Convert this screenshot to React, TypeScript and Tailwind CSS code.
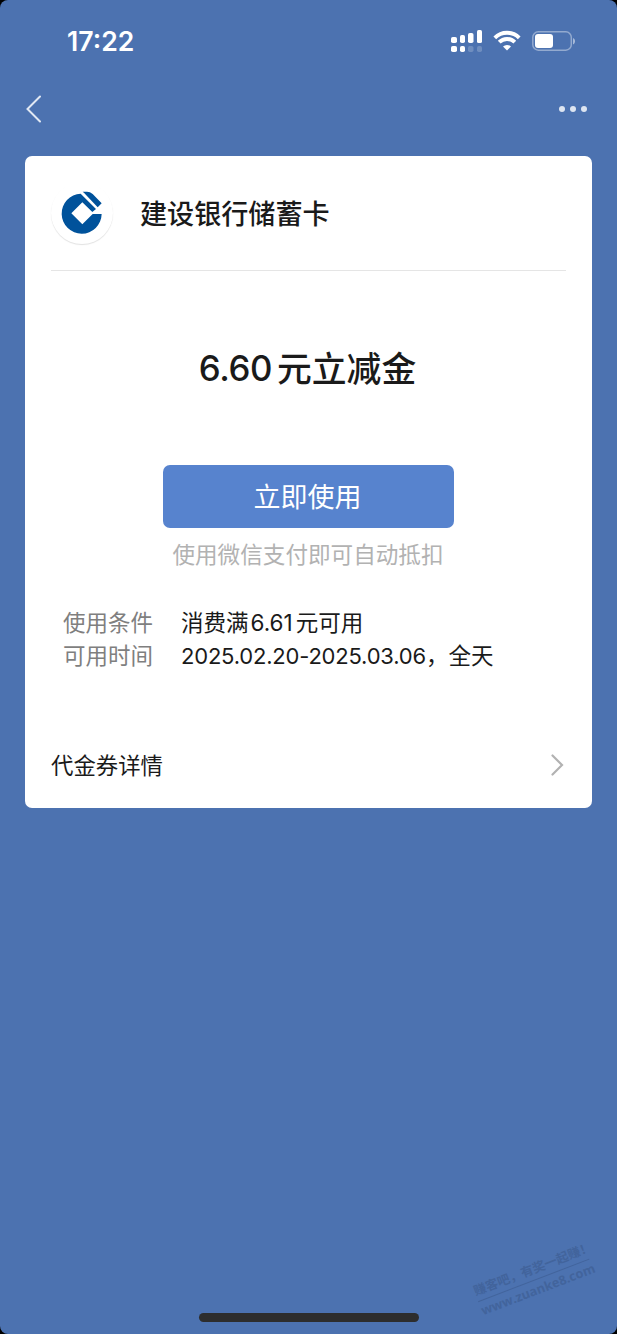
function StatusIcons() {
  return (
    <svg width="125" height="24" viewBox="0 0 125 24" fill="none">
      <g fill="#fff">
        <rect x="1" y="8" width="6" height="6" rx="1.8" />
        <rect x="10" y="6" width="5" height="8" rx="1.8" />
        <rect x="18" y="4" width="5.5" height="10" rx="1.8" />
        <rect x="27" y="1" width="5" height="13" rx="1.6" />
        <rect x="1" y="17" width="6" height="6" rx="1.8" />
        <rect x="10" y="17" width="5" height="6" rx="1.8" />
        <rect x="18" y="17" width="5.5" height="6" rx="1.8" opacity="0.2" />
        <rect x="27" y="17" width="5" height="6" rx="1.8" opacity="0.2" />
      </g>
      <g stroke="#fff" strokeWidth="3.9">
        <path d="M44.8 8.8a17.3 17.3 0 0 1 24.4 0" />
        <path d="M49.2 13.2a11 11 0 0 1 15.6 0" />
      </g>
      <path d="M57 21.5l-4-4a5.8 5.8 0 0 1 8 0z" fill="#fff" />
      <rect x="82.8" y="2.8" width="38.5" height="18.4" rx="5.5" stroke="#fff" strokeOpacity="0.4" strokeWidth="1.5" />
      <rect x="85" y="5" width="18" height="14" rx="3" fill="#fff" />
      <path d="M123 9a3.5 3.5 0 0 1 0 6.4z" fill="#fff" fillOpacity="0.5" />
    </svg>
  );
}

function BankLogo() {
  return (
    <svg width="62" height="62" viewBox="3 1 186 186">
      <g fill="#00529b">
        <path d="M92 36A60 60 0 1 0 155 97H128L97 128L64 95L97 62L127 91L138 82Z" />
        <path d="M98 30H111Q120 30 128 37L155 65L143 77L106 38Q103 33 98 30Z" />
      </g>
    </svg>
  );
}

export default function App() {
  return (
    <div className="bg-black">
      <div className="relative flex h-[1334px] w-[617px] flex-col overflow-hidden rounded-lg bg-[#4c72b0] font-['Inter','Noto_Sans_CJK_SC',sans-serif]">
        <header className="flex h-[82px] items-center justify-between pl-[67px] pr-[42px]">
          <span className="pt-0.5 text-[26.6px] font-semibold text-white">17:22</span>
          <StatusIcons />
        </header>

        <nav className="flex h-[54px] items-center justify-between pl-[25px] pr-[30px]">
          <svg width="16" height="28" viewBox="0 0 16 28" fill="none">
            <path d="M15 1.5L2.5 14L15 26.5" stroke="#e1e8f3" strokeWidth="2" strokeLinecap="round" />
          </svg>
          <div className="flex gap-[5px]">
            <i className="size-1.5 rounded-full bg-[#dde5f1]" />
            <i className="size-1.5 rounded-full bg-[#dde5f1]" />
            <i className="size-1.5 rounded-full bg-[#dde5f1]" />
          </div>
        </nav>

        <main className="mx-[25px] mt-5 flex h-[652px] flex-col rounded-[7px] bg-white px-[26px] text-[#1a1a1a]">
          <div className="flex h-[115px] items-center border-b border-[#e5e5e5]">
            <div className="size-[62px] rounded-full shadow-[0_1px_1px_rgba(0,0,0,0.12)]">
              <BankLogo />
            </div>
            <h1 className="ml-[27px] pt-[5px] text-[27.1px] font-medium">建设银行储蓄卡</h1>
          </div>

          <div className="mt-[73px] flex h-[50px] items-center justify-center gap-[5px] pr-0.5 text-[34.8px] font-medium">
            <span className="pb-0.5 tracking-[-0.4px]">6.60</span>
            <span>元立减金</span>
          </div>

          <button className="mx-auto mt-[71px] h-[63px] w-[291px] rounded-[7px] bg-[#5783ce] pr-0.5 pt-1 text-[27px] text-white">
            立即使用
          </button>
          <p className="mt-3 pr-px text-center text-[22.6px] leading-[30px] text-[#b2b2b2]">
            使用微信支付即可自动抵扣
          </p>

          <dl className="mt-9 grid grid-cols-[118px_1fr] pl-3 text-[22.5px] leading-[33px]">
            <dt className="text-[#7f7f7f]">使用条件</dt>
            <dd>
              消费满<span className="ml-0.5 mr-[3px]">6.61</span>元可用
            </dd>
            <dt className="text-[#7f7f7f]">可用时间</dt>
            <dd>
              <span className="text-[22px] tracking-[-0.2px]">2025.02.20-2025.03.06</span>，全天
            </dd>
          </dl>

          <div className="mt-[73px] flex h-9 items-center justify-between text-[22.4px]">
            <span className="pt-[3px]">代金券详情</span>
            <svg className="mr-0.5 mt-0.5" width="13" height="22" viewBox="0 0 13 22" fill="none">
              <path d="M1.5 1.5L11 11l-9.5 9.5" stroke="#b2b2b2" strokeWidth="2.2" strokeLinecap="round" />
            </svg>
          </div>
        </main>

        <div className="mx-auto mb-[12px] mt-auto h-[9px] w-[220px] rounded-full bg-[#2d2d2d]" />

        <div className="absolute left-[474px] top-[1261px] w-[119px] -rotate-[21deg] whitespace-nowrap text-[#42649c]">
          <div className="h-[20px] border-b border-[#42649c] text-[12.6px] font-bold leading-[17px]">赚客吧，有奖一起赚！</div>
          <div className="font-['Open_Sans',sans-serif] text-[12.8px] font-bold leading-[18px]">www.zuanke8.com</div>
        </div>
      </div>
    </div>
  );
}
